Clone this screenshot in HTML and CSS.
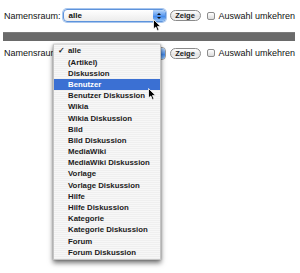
FILE: index.html
```html
<!DOCTYPE html>
<html lang="de">
<head>
	<meta charset="UTF-8">
	<title>Namensraum</title>
	<link rel="stylesheet" href="styles.css">
</head>
<body>
	<div class="page">
		<div class="row row-first">
			<span class="label">Namensraum:</span>
			<div class="select focused">
				<span class="select-text">alle</span>
				<span class="select-arrow"><i class="up"></i><i class="down"></i></span>
			</div>
			<span class="btn">Zeige</span>
			<span class="check"></span>
			<span class="label">Auswahl umkehren</span>
		</div>

		<div class="bar"></div>

		<div class="row row-second">
			<span class="label">Namensraum:</span>
			<div class="select">
				<span class="select-text"></span>
				<span class="select-arrow"><i class="up"></i><i class="down"></i></span>
			</div>
			<span class="btn">Zeige</span>
			<span class="check"></span>
			<span class="label">Auswahl umkehren</span>
		</div>

		<ul class="menu">
			<li class="checked">alle</li>
			<li>(Artikel)</li>
			<li>Diskussion</li>
			<li class="active">Benutzer</li>
			<li>Benutzer Diskussion</li>
			<li>Wikia</li>
			<li>Wikia Diskussion</li>
			<li>Bild</li>
			<li>Bild Diskussion</li>
			<li>MediaWiki</li>
			<li>MediaWiki Diskussion</li>
			<li>Vorlage</li>
			<li>Vorlage Diskussion</li>
			<li>Hilfe</li>
			<li>Hilfe Diskussion</li>
			<li>Kategorie</li>
			<li>Kategorie Diskussion</li>
			<li>Forum</li>
			<li>Forum Diskussion</li>
		</ul>

		<svg class="cursor cursor-one" width="9" height="13" viewBox="0 0 9 13"><path d="M0.5 0.5 L0.5 10 L2.8 8 L4.4 11.8 L6 11.1 L4.5 7.4 L7.6 7.4 Z" fill="#000" stroke="#fff" stroke-width="0.8"/></svg>
		<svg class="cursor cursor-two" width="9" height="13" viewBox="0 0 9 13"><path d="M0.5 0.5 L0.5 10 L2.8 8 L4.4 11.8 L6 11.1 L4.5 7.4 L7.6 7.4 Z" fill="#000" stroke="#fff" stroke-width="0.8"/></svg>
	</div>
</body>
</html>
```

FILE: styles.css
```css
*{padding: 0;margin: 0;box-sizing: border-box;}
body{background: #fff;font-family: "Liberation Sans", Arial, sans-serif;color: #111;}
.page{
	width: 300px;
	height: 273px;
	position: relative;
	overflow: hidden;
}

.row{
	display: flex;
	align-items: center;
	padding-left: 4px;
	height: 15px;
}
.row-first{margin-top: 8px;}
.row-second{margin-top: 5px;height: 14px;}

.label{
	font-size: 9px;
	white-space: nowrap;
}

.select{
	width: 103px;
	height: 13px;
	margin-left: 2px;
	display: flex;
	border: 1px solid #9a9a9a;
	border-radius: 4px;
	background: linear-gradient(#fff, #ececec);
}
.select.focused{
	border-color: #5d93dc;
	box-shadow: 0 0 0 1px #a8c6ee;
}
.select-text{
	flex: 1;
	font-size: 8px;
	font-weight: bold;
	line-height: 11px;
	padding-left: 5px;
}
.select-arrow{
	width: 12px;
	display: flex;
	flex-direction: column;
	align-items: center;
	justify-content: center;
	gap: 2px;
	border-radius: 0 3px 3px 0;
	background: linear-gradient(#b8d6fa, #5b9af0 50%, #3f86ea 55%, #8fc0f6);
}
.select-arrow i{
	width: 0;
	height: 0;
	border-left: 2px solid transparent;
	border-right: 2px solid transparent;
}
.select-arrow .up{border-bottom: 2px solid #111;}
.select-arrow .down{border-top: 2px solid #111;}

.btn{
	width: 31px;
	height: 11px;
	margin-left: 4px;
	border: 1px solid #8a8a8a;
	border-radius: 6px;
	background: linear-gradient(#fff, #e4e4e4 60%, #f4f4f4);
	font-size: 7.5px;
	font-weight: bold;
	line-height: 9px;
	text-align: center;
	color: #222;
}

.check{
	width: 8px;
	height: 8px;
	margin: 0 4px 0 6px;
	border: 1px solid #8c8c8c;
	border-radius: 2px;
	background: linear-gradient(#fff, #dcdcdc);
}

.bar{
	margin: 9px 5px 0 3px;
	height: 9px;
	background: #6a6a6a;
	border-top: 1px solid #7c7c7c;
}

.menu{
	position: absolute;
	left: 53px;
	top: 44px;
	width: 108px;
	list-style: none;
	padding: 0.4px 0 1px;
	background: repeating-linear-gradient(#f7f7f7 0 1px, #efefef 1px 2px);
	border: 1px solid #c4c4c4;
	border-top-color: #d8d8d8;
	box-shadow: 0 3px 5px rgba(0,0,0,0.55), 0 0 2px rgba(0,0,0,0.25);
}
.menu li{
	height: 11.2px;
	line-height: 11.2px;
	padding-left: 14px;
	font-size: 7.8px;
	font-weight: bold;
	color: #1c1c1c;
	white-space: nowrap;
	position: relative;
}
.menu li.checked::before{
	content: "\2713";
	position: absolute;
	left: 4px;
	font-size: 8px;
}
.menu li.active{
	background: #3b70d3;
	color: #fff;
}

.cursor{
	position: absolute;
}
.cursor-one{left: 153px;top: 19px;}
.cursor-two{left: 148px;top: 88px;}
```
